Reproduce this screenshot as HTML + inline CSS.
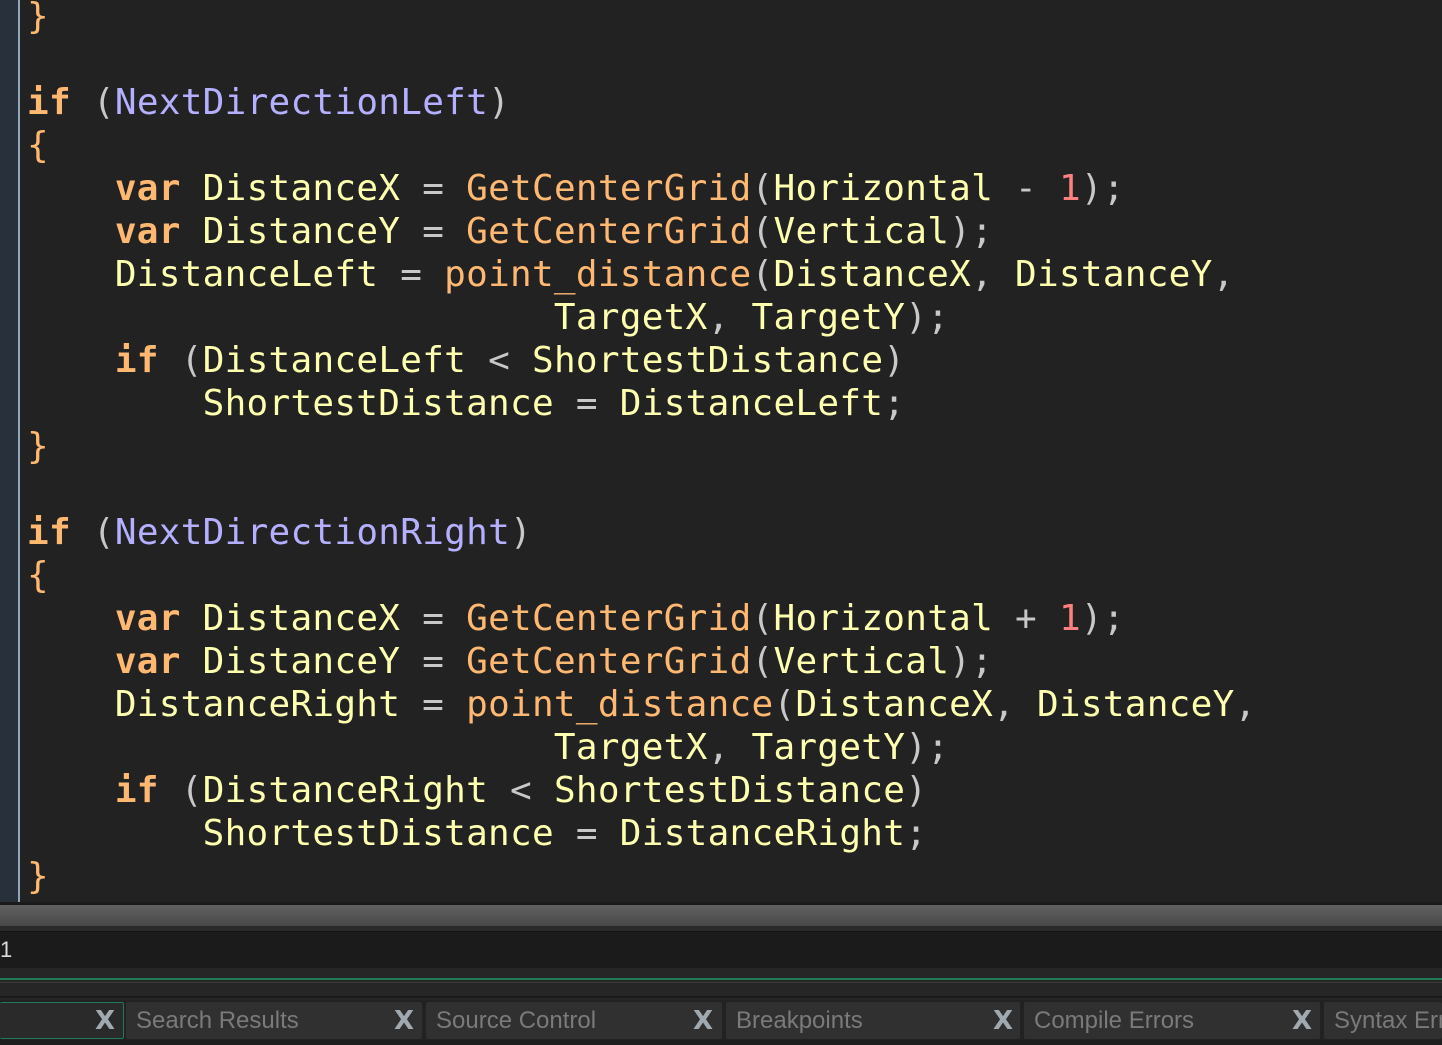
<!DOCTYPE html>
<html><head><style>
body{margin:0;width:1442px;height:1045px;overflow:hidden;background:#222;position:relative;font-family:"DejaVu Sans Mono","Liberation Mono",monospace}
.gut{position:absolute;left:0;top:0;width:18px;height:902px;background:#28313b}
.gl{position:absolute;left:18px;top:0;width:2px;height:902px;background:#8fa6b8}
.code{position:absolute;left:27px;top:-5px;font-size:36px;line-height:43px;white-space:pre;color:#ffffb0;letter-spacing:0.28px}
.k{color:#ffb871;font-weight:bold}.f{color:#ffb871}.p{color:#b4b0ff}.n{color:#ff8080}.o{color:#c8c8c8}.b{color:#ffb871}
.sep1{position:absolute;left:0;top:902px;width:1442px;height:3px;background:#1a1a1a}
.sb{position:absolute;left:0;top:905px;width:1442px;height:21px;background:linear-gradient(#616161,#484848)}
.sep2{position:absolute;left:0;top:926px;width:1442px;height:5px;background:#2a2a2a;border-bottom:1px solid #151515}
.out{position:absolute;left:0;top:932px;width:1442px;height:36px;background:#1b1b1b;color:#ddd;font-family:"Liberation Sans",sans-serif;font-size:22px;line-height:36px}
.mid{position:absolute;left:0;top:968px;width:1442px;height:32px;background:#262626}
.green{position:absolute;left:0;top:978px;width:1442px;height:2px;background:#1f7a55}
.line3{position:absolute;left:0;top:982px;width:1442px;height:1px;background:#3a3a3a}
.line4{position:absolute;left:0;top:996px;width:1442px;height:2px;background:#1a1a1a}
.tab{position:absolute;top:1002px;height:37px;background:#303030;color:#7a7a7a;font-family:"Liberation Sans",sans-serif;font-size:24px;line-height:37px;padding-left:10px;box-sizing:border-box;border-radius:2px;white-space:nowrap;overflow:hidden}
.x{position:absolute;top:1008px;color:#a0a8b0;font-family:"DejaVu Sans",sans-serif;font-size:26px;font-weight:bold;line-height:26px}
.bot{position:absolute;left:0;top:1040px;width:1442px;height:5px;background:#1e1e1e}
</style></head><body>
<div class="gut"></div><div class="gl"></div>
<div class="code"><span class="b">}</span>

<span class="k">if</span> <span class="o">(</span><span class="p">NextDirectionLeft</span><span class="o">)</span>
<span class="b">{</span>
    <span class="k">var</span> DistanceX <span class="o">=</span> <span class="f">GetCenterGrid</span><span class="o">(</span>Horizontal <span class="o">-</span> <span class="n">1</span><span class="o">);</span>
    <span class="k">var</span> DistanceY <span class="o">=</span> <span class="f">GetCenterGrid</span><span class="o">(</span>Vertical<span class="o">);</span>
    DistanceLeft <span class="o">=</span> <span class="f">point_distance</span><span class="o">(</span>DistanceX<span class="o">,</span> DistanceY<span class="o">,</span>
                        TargetX<span class="o">,</span> TargetY<span class="o">);</span>
    <span class="k">if</span> <span class="o">(</span>DistanceLeft <span class="o">&lt;</span> ShortestDistance<span class="o">)</span>
        ShortestDistance <span class="o">=</span> DistanceLeft<span class="o">;</span>
<span class="b">}</span>

<span class="k">if</span> <span class="o">(</span><span class="p">NextDirectionRight</span><span class="o">)</span>
<span class="b">{</span>
    <span class="k">var</span> DistanceX <span class="o">=</span> <span class="f">GetCenterGrid</span><span class="o">(</span>Horizontal <span class="o">+</span> <span class="n">1</span><span class="o">);</span>
    <span class="k">var</span> DistanceY <span class="o">=</span> <span class="f">GetCenterGrid</span><span class="o">(</span>Vertical<span class="o">);</span>
    DistanceRight <span class="o">=</span> <span class="f">point_distance</span><span class="o">(</span>DistanceX<span class="o">,</span> DistanceY<span class="o">,</span>
                        TargetX<span class="o">,</span> TargetY<span class="o">);</span>
    <span class="k">if</span> <span class="o">(</span>DistanceRight <span class="o">&lt;</span> ShortestDistance<span class="o">)</span>
        ShortestDistance <span class="o">=</span> DistanceRight<span class="o">;</span>
<span class="b">}</span></div>
<div class="sep1"></div><div class="sb"></div><div class="sep2"></div>
<div class="out">1</div>
<div class="mid"></div><div class="green"></div><div class="line3"></div><div class="line4"></div>
<div class="tab" style="left:0;width:124px;background:#2a2a2a;border:1px solid #1f7a55;border-left:none"></div>
<div class="tab" style="left:126px;width:296px">Search Results</div>
<div class="tab" style="left:426px;width:296px">Source Control</div>
<div class="tab" style="left:726px;width:294px">Breakpoints</div>
<div class="tab" style="left:1024px;width:296px">Compile Errors</div>
<div class="tab" style="left:1324px;width:118px">Syntax Errors</div>
<div class="x" style="left:95px">X</div>
<div class="x" style="left:394px">X</div>
<div class="x" style="left:693px">X</div>
<div class="x" style="left:993px">X</div>
<div class="x" style="left:1292px">X</div>
<div class="bot"></div>
</body></html>
